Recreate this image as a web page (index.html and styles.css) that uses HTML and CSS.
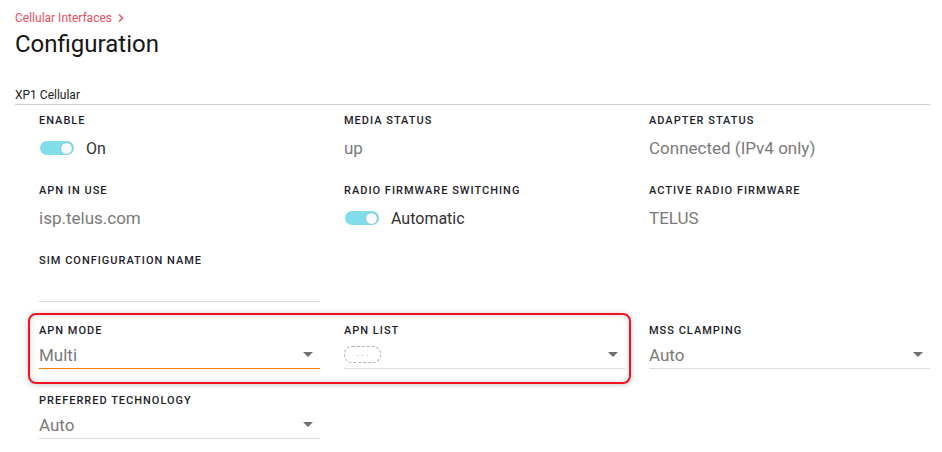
FILE: index.html
```html
<!DOCTYPE html>
<html>
<head>
<meta charset="utf-8">
<link rel="stylesheet" href="styles.css">
</head>
<body>
<div class="page">
  <div class="crumb">Cellular Interfaces <svg class="chev" width="8" height="10" viewBox="0 0 8 10"><path d="M2 1.5 L5.5 5 L2 8.5" fill="none" stroke="currentColor" stroke-width="1.4"/></svg></div>
  <h1 class="title">Configuration</h1>
  <div class="section">XP1 Cellular</div>
  <div class="grid">
    <div class="field">
      <div class="label">Enable</div>
      <div class="toggle-row"><span class="switch"><span class="thumb"></span></span><span class="toggle-text">On</span></div>
    </div>
    <div class="field">
      <div class="label">Media Status</div>
      <div class="value">up</div>
    </div>
    <div class="field">
      <div class="label">Adapter Status</div>
      <div class="value">Connected (IPv4 only)</div>
    </div>

    <div class="field">
      <div class="label">APN in use</div>
      <div class="value">isp.telus.com</div>
    </div>
    <div class="field">
      <div class="label">Radio Firmware Switching</div>
      <div class="toggle-row"><span class="switch"><span class="thumb"></span></span><span class="toggle-text">Automatic</span></div>
    </div>
    <div class="field">
      <div class="label">Active Radio Firmware</div>
      <div class="value">TELUS</div>
    </div>

    <div class="field">
      <div class="label">SIM Configuration Name</div>
      <div class="input"></div>
    </div>
    <div class="field"></div>
    <div class="field"></div>

    <div class="field r4 c1">
      <div class="label">APN Mode</div>
      <div class="select focused"><span class="sel-text">Multi</span><span class="caret"></span></div>
    </div>
    <div class="field r4 c2">
      <div class="label">APN List</div>
      <div class="select"><span class="chip">. . .</span><span class="caret"></span></div>
    </div>
    <div class="field r4 c3">
      <div class="label">MSS Clamping</div>
      <div class="select"><span class="sel-text">Auto</span><span class="caret"></span></div>
    </div>
    <div class="highlight"></div>

    <div class="field r5 c1">
      <div class="label">Preferred Technology</div>
      <div class="select"><span class="sel-text">Auto</span><span class="caret"></span></div>
    </div>
  </div>
</div>
</body>
</html>
```

FILE: styles.css
```css
html, body {
  margin: 0;
  background: #ffffff;
}
body {
  font-family: Roboto, "Liberation Sans", Arial, sans-serif;
  color: #1a1a1a;
}
.page {
  padding: 10px 12px 0 15px;
}
.crumb {
  font-size: 12px;
  line-height: 16px;
  color: #e8505f;
  display: flex;
  align-items: center;
  gap: 5px;
}
.chev {
  display: block;
}
.title {
  margin: 4px 0 0 0;
  font-size: 24px;
  font-weight: 400;
  line-height: 28px;
  color: #151515;
}
.section {
  margin-top: 29px;
  font-size: 12px;
  line-height: 16px;
  padding-bottom: 1px;
  border-bottom: 1px solid #cfcfcf;
  color: #222;
}
.grid {
  padding: 9px 0 0 24px;
  display: grid;
  grid-template-columns: repeat(3, 281px);
  column-gap: 24px;
  grid-template-rows: repeat(5, 70px);
}
.field {
  min-width: 0;
}
.r4 { grid-row: 4; }
.r5 { grid-row: 5; }
.c1 { grid-column: 1; }
.c2 { grid-column: 2; }
.c3 { grid-column: 3; }
.label {
  font-size: 11px;
  line-height: 14px;
  font-weight: 500;
  letter-spacing: 1px;
  text-transform: uppercase;
  color: #1d1d2a;
}
.value {
  margin-top: 6px;
  font-size: 17px;
  line-height: 28px;
  color: #7a7a7a;
}
.toggle-row {
  margin-top: 6px;
  height: 28px;
  display: flex;
  align-items: center;
  gap: 12px;
  padding-left: 1px;
}
.switch {
  width: 34px;
  height: 14px;
  border-radius: 7px;
  background: #80dde9;
  display: flex;
  align-items: center;
  justify-content: flex-end;
  padding-right: 2px;
  box-sizing: border-box;
}
.thumb {
  width: 11px;
  height: 11px;
  border-radius: 50%;
  background: #fafafa;
  box-shadow: 0 0 1px rgba(0,0,0,0.35);
}
.toggle-text {
  font-size: 16px;
  color: #333;
}
.input {
  margin-top: 3px;
  height: 30px;
  border-bottom: 1px solid #dcdcdc;
}
.select {
  margin-top: 3px;
  height: 27px;
  border-bottom: 1px solid #dcdcdc;
  display: flex;
  align-items: center;
  justify-content: space-between;
}
.select.focused {
  border-bottom-color: #f07d00;
}
.sel-text {
  font-size: 17px;
  color: #7a7a7a;
}
.caret {
  width: 0;
  height: 0;
  border-left: 5px solid transparent;
  border-right: 5px solid transparent;
  border-top: 5px solid #707070;
  margin-right: 7px;
}
.chip {
  width: 37px;
  height: 17px;
  box-sizing: border-box;
  border: 1px dashed #b0b0b0;
  border-radius: 8px;
  font-size: 9px;
  line-height: 13px;
  text-align: center;
  color: #b08888;
}
.highlight {
  grid-column: 1 / 3;
  grid-row: 4;
  margin: -11px -6px 10px -11px;
  border: 2px solid #f0141e;
  border-radius: 8px;
  box-shadow: 0 1px 6px rgba(0,0,0,0.22), inset 0 0 6px rgba(0,0,0,0.15);
  pointer-events: none;
}
```
